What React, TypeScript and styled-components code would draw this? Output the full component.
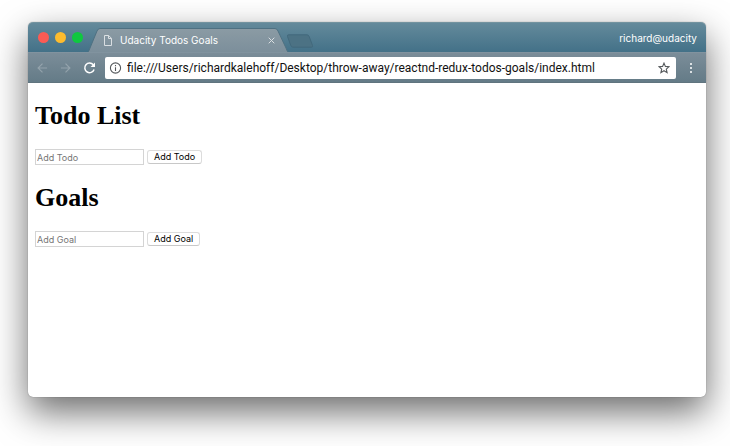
import React from "react";
import styled, { createGlobalStyle } from "styled-components";

const GlobalStyle = createGlobalStyle`
  * { box-sizing: border-box; }
  body { margin: 0; background: #fff; overflow: hidden; }
`;

const sans = `Inter, "Liberation Sans", sans-serif`;

const Desktop = styled.div`
  display: flex;
  min-height: 100vh;
  padding: 22px 24px 49px 28px;
`;

const Window = styled.div`
  flex: 1;
  min-width: 0;
  display: flex;
  flex-direction: column;
  border-radius: 5px;
  background: #fff;
  box-shadow: 0 0 1px rgba(0, 0, 0, 0.5), 0 15px 36px rgba(0, 0, 0, 0.58);
`;

const TitleBar = styled.header`
  display: flex;
  align-items: flex-end;
  height: 30px;
  padding: 0 9px 0 10px;
  border-radius: 5px 5px 0 0;
  border-top: 1px solid #73939f;
  background: linear-gradient(#648a9b, #437188);
`;

const Lights = styled.div`
  display: flex;
  gap: 6px;
  align-self: center;
`;

const Light = styled.button<{ $color: string }>`
  width: 11px;
  height: 11px;
  padding: 0;
  border: 0;
  border-radius: 50%;
  background: ${(p) => p.$color};
`;

const Tab = styled.div`
  position: relative;
  display: flex;
  align-items: center;
  width: 200px;
  height: 24px;
  margin-left: 5px;
  padding: 0 13px 0 16px;
  color: #fff;
  font: 400 10px/14px ${sans};
`;

const TabShape = styled.svg`
  position: absolute;
  inset: 0;
  width: 100%;
  height: 100%;
`;

const TabTitle = styled.span`
  position: relative;
  flex: 1;
  margin-left: 8px;
  white-space: nowrap;
`;

const IconButton = styled.button`
  position: relative;
  display: flex;
  padding: 0;
  border: 0;
  background: none;
  color: inherit;
`;

const Icon = styled.svg`
  position: relative;
  display: block;
  flex: none;
  fill: none;
  stroke: currentColor;
`;

const NewTab = styled(IconButton)`
  margin-bottom: 4px;
  margin-left: -2px;
`;

const Profile = styled.span`
  margin-left: auto;
  align-self: center;
  color: #fff;
  font: 400 10px/14px ${sans};
`;

const Toolbar = styled.nav`
  display: flex;
  align-items: center;
  height: 31px;
  padding: 0 12px 0 9px;
  border-top: 1px solid #81939f;
  border-bottom: 1px solid #60747e;
  background: linear-gradient(#7b8d99, #647b87);
  color: #fff;
`;

const NavButtons = styled.div`
  display: flex;
  gap: 12px;
`;

const AddressBar = styled.label`
  flex: 1;
  min-width: 0;
  display: flex;
  align-items: center;
  height: 22px;
  margin: 0 12px 0 9px;
  padding: 0 6px 0 4px;
  border-radius: 2px;
  background: #fff;
  color: #55595c;
`;

const Address = styled.input`
  flex: 1;
  min-width: 0;
  margin: 0 5px;
  padding: 0;
  border: 0;
  outline: 0;
  background: none;
  color: #111;
  font: 400 12px/16px Roboto, "Liberation Sans", sans-serif;
`;

const Page = styled.main`
  flex: 1;
  padding: 18px 7px;
`;

const Section = styled.section`
  margin-bottom: 18px;
`;

const Heading = styled.h1`
  margin: 0 0 18px;
  color: #000;
  font: 700 26px/30px "Liberation Serif", serif;
`;

const Form = styled.form`
  display: flex;
  align-items: center;
  gap: 3px;
  height: 16px;
`;

const Field = styled.input`
  width: 109px;
  height: 16px;
  padding: 0 1px;
  border: 1px solid #d4d4d4;
  border-radius: 0;
  outline: 0;
  background: #fff;
  font: 400 9px/12px ${sans};
  &::placeholder { color: #757575; opacity: 1; }
`;

const AddButton = styled.button`
  height: 14px;
  padding: 0 6px;
  border: 1px solid #dcdcdc;
  border-bottom-color: #c8c8c8;
  border-radius: 3px;
  background: #fff;
  color: #000;
  font: 400 9px/12px ${sans};
`;

const lists = [
  { title: "Todo List", action: "Add Todo" },
  { title: "Goals", action: "Add Goal" },
];

export default function App() {
  return (
    <Desktop>
      <GlobalStyle />
      <Window>
        <TitleBar>
          <Lights>
            <Light $color="#fc5b54" aria-label="Close window" />
            <Light $color="#fdbc2e" aria-label="Minimize window" />
            <Light $color="#0fc840" aria-label="Zoom window" />
          </Lights>
          <Tab>
            <TabShape viewBox="0 0 200 24" preserveAspectRatio="none" aria-hidden>
              <defs>
                <linearGradient id="tab" x1="0" y1="0" x2="0" y2="1">
                  <stop offset="0" stopColor="#8b9ba4" />
                  <stop offset="1" stopColor="#7c8f9b" />
                </linearGradient>
              </defs>
              <path d="M0 24 Q1 23 2 20 L9 3 Q10 .5 12 .5 H187 Q189 .5 190 3 L198 20 Q199 23 200 24Z" fill="url(#tab)" />
              <path d="M0 24 Q1 23 2 20 L9 3 Q10 .5 12 .5 H187 Q189 .5 190 3 L198 20 Q199 23 200 24" fill="none" stroke="#4f7182" strokeWidth="1" />
            </TabShape>
            <Icon width="8" height="11" viewBox="0 0 8 11" strokeWidth="1" opacity=".7" aria-hidden>
              <path d="M.5 .5H4.7L7.5 3.4V10.5H.5ZM4.5 .5V3.5H7.5" />
            </Icon>
            <TabTitle>Udacity Todos Goals</TabTitle>
            <IconButton aria-label="Close tab">
              <Icon width="7" height="7" viewBox="0 0 7 7" opacity=".7">
                <path d="M.7 .7 6.3 6.3M6.3 .7 .7 6.3" />
              </Icon>
            </IconButton>
          </Tab>
          <NewTab aria-label="New tab">
            <Icon width="28" height="14" viewBox="0 0 28 14">
              <path d="M2.5 .8H21Q22.5 .8 23.2 2.5L26.5 11.5Q27.2 13.2 25.5 13.2H7Q5.5 13.2 4.8 11.5L1.5 2.5Q1 .8 2.5 .8Z" fill="#4c7284" stroke="#42697c" />
            </Icon>
          </NewTab>
          <Profile>richard@udacity</Profile>
        </TitleBar>
        <Toolbar>
          <NavButtons>
            <IconButton aria-label="Back">
              <Icon width="11" height="12" viewBox="0 0 12 12" opacity=".25" strokeWidth="1.3">
                <path d="M11 6H1.5M6 1.2 1.2 6 6 10.8" />
              </Icon>
            </IconButton>
            <IconButton aria-label="Forward">
              <Icon width="11" height="12" viewBox="0 0 12 12" opacity=".25" strokeWidth="1.3">
                <path d="M1 6H10.5M6 1.2 10.8 6 6 10.8" />
              </Icon>
            </IconButton>
            <IconButton aria-label="Reload">
              <Icon width="13" height="12" viewBox="0 0 12 12" strokeWidth="1.5">
                <path d="M10.6 7.5A4.8 4.8 0 1 1 9.8 2.8" />
                <path d="M11.5 .5V5H7Z" fill="currentColor" stroke="none" />
              </Icon>
            </IconButton>
          </NavButtons>
          <AddressBar>
            <Icon width="13" height="12" viewBox="0 0 12 12" strokeWidth="1.1" aria-hidden>
              <circle cx="6" cy="6" r="5.1" />
              <path d="M6 5.2V9M6 3V4.2" />
            </Icon>
            <Address
              aria-label="Address"
              defaultValue="file:///Users/richardkalehoff/Desktop/throw-away/reactnd-redux-todos-goals/index.html"
            />
            <Icon width="12" height="12" viewBox="0 0 12 12" strokeWidth="1.1" aria-hidden>
              <path d="M6 1.1 7.4 4.4 11 4.7 8.3 7.1 9.1 10.6 6 8.7 2.9 10.6 3.7 7.1 1 4.7 4.6 4.4Z" />
            </Icon>
          </AddressBar>
          <IconButton aria-label="Menu">
            <Icon width="6" height="12" viewBox="0 0 6 12">
              <path d="M2 1h2v2H2zM2 5h2v2H2zM2 9h2v2H2z" fill="currentColor" stroke="none" opacity=".75" />
            </Icon>
          </IconButton>
        </Toolbar>
        <Page>
          {lists.map(({ title, action }) => (
            <Section key={title}>
              <Heading>{title}</Heading>
              <Form onSubmit={(e) => e.preventDefault()}>
                <Field type="text" placeholder={action} aria-label={action} />
                <AddButton>{action}</AddButton>
              </Form>
            </Section>
          ))}
        </Page>
      </Window>
    </Desktop>
  );
}
